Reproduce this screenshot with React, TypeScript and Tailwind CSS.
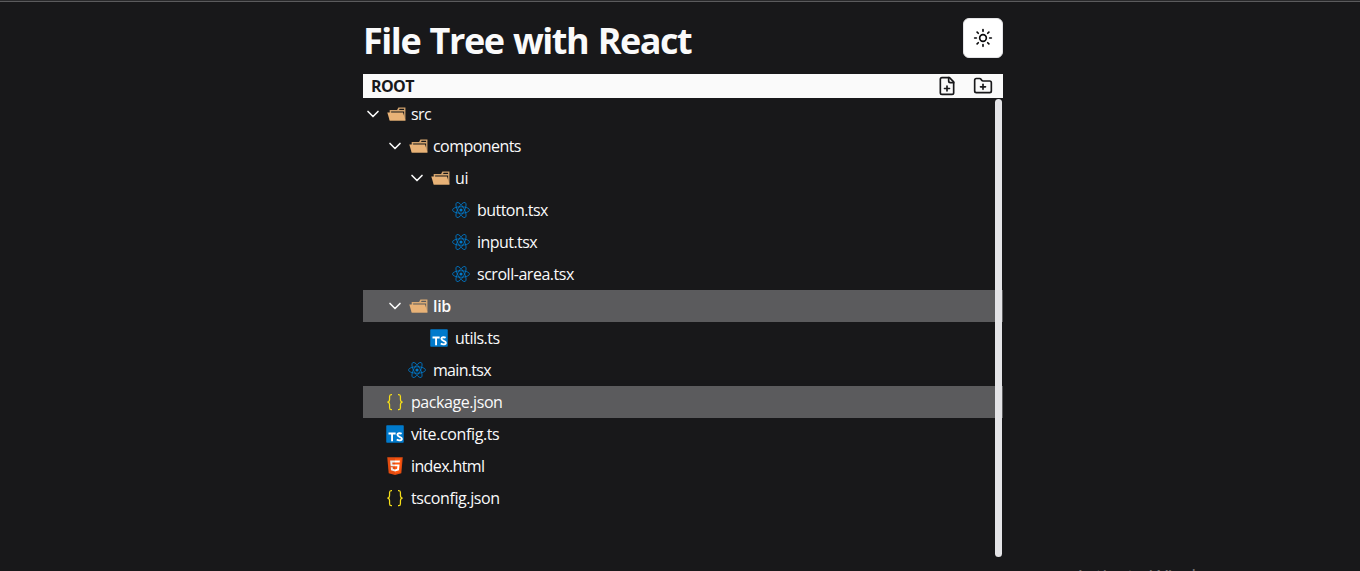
import { ChevronDown, FolderPlus, Sun } from "lucide-react";

type Kind = "folder" | "react" | "ts" | "json" | "html";

interface Node {
  name: string;
  kind: Kind;
  indent: string;
  tracking: string;
  active?: boolean;
  bold?: boolean;
}

const nodes: Node[] = [
  { name: "src", kind: "folder", indent: "pl-0", tracking: "tracking-[-0.6px]" },
  { name: "components", kind: "folder", indent: "pl-[22px]", tracking: "tracking-[-0.56px]" },
  { name: "ui", kind: "folder", indent: "pl-[44px]", tracking: "tracking-[-0.4px]" },
  { name: "button.tsx", kind: "react", indent: "pl-[88px]", tracking: "tracking-[-0.55px]" },
  { name: "input.tsx", kind: "react", indent: "pl-[88px]", tracking: "tracking-[-0.55px]" },
  { name: "scroll-area.tsx", kind: "react", indent: "pl-[88px]", tracking: "tracking-[-0.47px]" },
  { name: "lib", kind: "folder", indent: "pl-[22px]", tracking: "tracking-[-0.3px]", active: true, bold: true },
  { name: "utils.ts", kind: "ts", indent: "pl-[66px]", tracking: "tracking-[-0.52px]" },
  { name: "main.tsx", kind: "react", indent: "pl-[44px]", tracking: "tracking-[-0.7px]" },
  { name: "package.json", kind: "json", indent: "pl-[22px]", tracking: "tracking-[-0.43px]", active: true },
  { name: "vite.config.ts", kind: "ts", indent: "pl-[22px]", tracking: "tracking-[-0.38px]" },
  { name: "index.html", kind: "html", indent: "pl-[22px]", tracking: "tracking-[-0.62px]" },
  { name: "tsconfig.json", kind: "json", indent: "pl-[22px]", tracking: "tracking-[-0.4px]" },
];

function NodeIcon({ kind }: { kind: Kind }) {
  return (
    <svg viewBox="0 0 32 32" className="size-5 shrink-0">
      {kind === "folder" && (
        <g fill="#e8b277">
          <path d="M27.4 5.5h-9.2l-2.1 4.2H4.3v16.8h25.2v-21zm0 18.7H6.6V11.8h20.8zm0-14.5h-8.2l1-2.1h7.1z" opacity=".9" />
          <path d="M25.7 13.7H.5l3.8 12.8h25.2z" />
        </g>
      )}
      {kind === "react" && (
        <g fill="none" stroke="#007acc" strokeWidth="1.25">
          <ellipse cx="16" cy="16" rx="13.6" ry="5.2" />
          <ellipse cx="16" cy="16" rx="13.6" ry="5.2" transform="rotate(60 16 16)" />
          <ellipse cx="16" cy="16" rx="13.6" ry="5.2" transform="rotate(120 16 16)" />
          <circle cx="16" cy="16" r="2.5" fill="#007acc" stroke="none" />
        </g>
      )}
      {kind === "ts" && (
        <>
          <rect x="2" y="2" width="28" height="28" rx="1.2" fill="#007acc" />
          <g fill="none" stroke="#fff" strokeWidth="3">
            <path d="M5.600 15.100h11.400M11.300 15v12.400" />
            <path d="M26.600 15.700c-2.100-1.400-6.800-1.600-6.800 1.600 0 3.600 7.200 2.800 7.200 6.400 0 3.200-5.300 3.100-8.200 1.200" />
          </g>
        </>
      )}
      {kind === "json" && (
        <g fill="none" stroke="#f5de19" strokeWidth="2">
          <path d="M11.2 4H10C8 4 7.300 5 7.300 7v4.500C7.300 14.500 6.300 16 3.800 16c2.500 0 3.500 1.500 3.500 4.500V25c0 2 .7 3 2.700 3h1.200" />
          <path d="M20.800 4H22c2 0 2.700 1 2.700 3v4.500c0 3 1 4.500 3.500 4.500-2.500 0-3.500 1.500-3.500 4.500V25c0 2-.7 3-2.700 3h-1.200" />
        </g>
      )}
      {kind === "html" && (
        <>
          <path fill="#e34c10" d="M5.900 27.500 3.600 2h24.800l-2.300 25.500L16 30.300z" />
          <path fill="#ff5810" d="m16 28.100 8.200-2.300L26.100 4.100H16z" />
          <path fill="#ebebeb" d="M16 13.400h-4.100l-.3-3.200H16V7.100H8.200l.1.800.8 8.600H16zM16 21.400l-3.500-.9-.2-2.500H9.200l.4 4.900 6.400 1.800z" />
          <path fill="#fff" d="M16 13.400v3.100h3.800l-.4 4-3.400.9v3.300l6.300-1.800.9-9.500zM16 7.100v3.100h7.500l.3-3.100z" />
        </>
      )}
    </svg>
  );
}

function TreeRow({ node }: { node: Node }) {
  const folder = node.kind === "folder";
  return (
    <li className={`flex h-8 items-center ${node.indent} ${node.active ? "bg-[#5b5b5d]" : ""}`}>
      {folder ? <ChevronDown className="mr-1 size-5 shrink-0" strokeWidth={2} /> : null}
      <span className={folder ? "mr-1" : "mr-1.5"}>
        <NodeIcon kind={node.kind} />
      </span>
      <span className={`text-[16px] leading-6 ${node.tracking} ${node.bold ? "font-semibold" : ""}`}>{node.name}</span>
    </li>
  );
}

export default function App() {
  return (
    <div className="relative h-[571px] overflow-hidden border-t border-[#29292b] bg-[#18181a] font-['Open_Sans','Noto_Sans',sans-serif] text-[#fafafa]">
      <div className="h-px bg-[#5b5b5d]" />
      <main className="mx-auto flex w-[640px] -translate-x-[-3px] flex-col pt-4">
        <header className="flex h-10 items-center justify-between">
          <h1 className="pt-1.5 text-[36px] leading-10 font-bold tracking-[-1.45px] [word-spacing:1.5px] whitespace-nowrap">File Tree with React</h1>
          <button aria-label="Toggle theme" className="flex size-10 items-center justify-center rounded-md border border-[#e4e4e7] bg-white text-[#09090b]">
            <Sun className="size-5" />
          </button>
        </header>
        <div className="mt-4 flex h-6 items-center justify-between bg-[#fafafa] pr-2.5 pl-2 text-[#18181a]">
          <span className="text-[16px] font-bold tracking-[-0.6px]">ROOT</span>
          <div className="flex gap-4">
            <svg viewBox="0 0 24 24" fill="none" stroke="currentColor" strokeWidth="2" strokeLinecap="round" strokeLinejoin="round" className="size-5">
              <path d="M15 2H6a2 2 0 0 0-2 2v16a2 2 0 0 0 2 2h12a2 2 0 0 0 2-2V7Z" />
              <path d="M14 2v4a2 2 0 0 0 2 2h4M9 15h6M12 18v-6" />
            </svg>
            <FolderPlus className="size-5" />
          </div>
        </div>
        <section className="relative h-[460px]">
          <ul>
            {nodes.map((node) => (
              <TreeRow key={node.name} node={node} />
            ))}
          </ul>
          <div className="absolute top-px right-px h-[458px] w-[7px] rounded-full bg-[#e4e4e7]" />
        </section>
      </main>
      <div className="absolute top-[562px] left-[1074px] text-[20px] leading-7 tracking-[-0.4px] whitespace-nowrap text-[#707072]">Activate Windows</div>
    </div>
  );
}
